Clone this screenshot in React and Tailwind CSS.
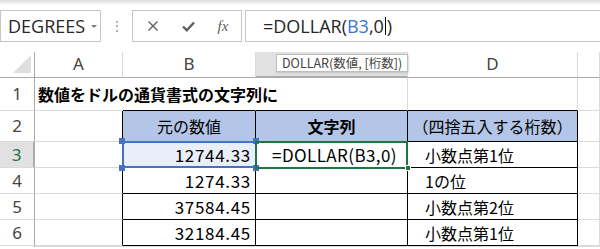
import React from "react";

// Excel-like spreadsheet view: DOLLAR function example

const GRID = "border-r border-b border-[#dadada]";
const BLACK = "border-r border-b border-black";

function XIcon() {
  return (
    <svg width="12" height="12" viewBox="0 0 12 12">
      <path d="M1.5 1.5 L10.5 10.5 M10.5 1.5 L1.5 10.5" stroke="#5f5f5f" strokeWidth="1.4" fill="none" />
    </svg>
  );
}

function CheckIcon() {
  return (
    <svg width="13" height="11" viewBox="0 0 13 11">
      <path d="M1 5.5 L4.8 9.2 L12 1.5" stroke="#5f5f5f" strokeWidth="2.4" fill="none" strokeLinejoin="miter" />
    </svg>
  );
}

function Toolbar() {
  return (
    <div className="flex h-[32px] items-stretch">
      <div className="flex w-[101px] items-center border border-[#c6c6c6] pl-[7px] font-[family-name:'Open_Sans',sans-serif] text-[18px] text-[#262626]">
        <span className="leading-none">DEGREES</span>
        <span className="ml-[6px] h-0 w-0 border-x-[3px] border-t-[3px] border-x-transparent border-t-[#7a7a7a]" />
      </div>
      <div className="flex w-[31px] flex-col items-center justify-center gap-[2.5px]">
        <span className="h-[2px] w-[2px] bg-[#b5b5b5]" />
        <span className="h-[2px] w-[2px] bg-[#b5b5b5]" />
        <span className="h-[2px] w-[2px] bg-[#b5b5b5]" />
      </div>
      <div className="flex w-[110px] items-center border border-[#c6c6c6]">
        <div className="flex w-[38px] justify-center pl-[1px]">
          <XIcon />
        </div>
        <div className="flex w-[34px] justify-center">
          <CheckIcon />
        </div>
        <div className="flex w-[36px] justify-center font-[family-name:'Liberation_Serif',serif] text-[15px] italic text-[#5f5f5f]">
          fx
        </div>
      </div>
      <div className="ml-[3px] flex flex-1 items-center border-y border-l border-[#c6c6c6] pl-[17px] font-[family-name:'Open_Sans',sans-serif] text-[18px] text-[#262626]">
        <span className="leading-none">=DOLLAR(</span>
        <span className="leading-none text-[#3b74c9]">B3</span>
        <span className="leading-none">,0</span>
        <span className="mx-[1px] h-[18px] w-[1px] bg-black" />
        <span className="leading-none">)</span>
      </div>
    </div>
  );
}

function ColHeader({ label, selected, children }) {
  return (
    <div
      className={`relative flex items-center justify-center border-r border-b border-b-[#ababab] border-r-[#dadada] pb-[2px] font-[family-name:'Noto_Sans',sans-serif] text-[17px] text-[#444] ${
        selected ? "border-b-2 border-b-[#217346] bg-[#e1e1e1]" : "bg-white"
      }`}
    >
      {label}
      {children}
    </div>
  );
}

function RowHeader({ n, selected }) {
  return (
    <div
      className={`flex items-center justify-center border-b border-r border-b-[#dadada] border-r-[#ababab] font-[family-name:'Noto_Sans',sans-serif] text-[17px] ${
        selected ? "border-r-2 border-r-[#217346] bg-[#e1e1e1] text-[#217346]" : "text-[#444]"
      }`}
    >
      {n}
    </div>
  );
}

const rows = [
  { n: 4, num: "1274.33", note: "1の位" },
  { n: 5, num: "37584.45", note: "小数点第2位" },
  { n: 6, num: "32184.45", note: "小数点第1位" },
];

export default function App() {
  return (
    <div className="h-[249px] w-[600px] overflow-hidden bg-white">
      <div className="h-[10px] bg-gradient-to-b from-[#dcdcdc] via-white to-white" />
      <Toolbar />
      <div className="mt-[10px] grid grid-cols-[35px_88px_133px_152px_170px_1fr] grid-rows-[26px_33px_31px_26px_26px_26px_26px] font-[family-name:'Noto_Sans_CJK_JP',sans-serif] text-[16px] text-black">
        {/* column headers */}
        <div className="relative border-r border-b border-r-[#ababab] border-b-[#ababab]">
          <div className="absolute bottom-[4px] right-[3px] h-0 w-0 border-b-[18px] border-l-[18px] border-b-[#dfdfdf] border-l-transparent" />
        </div>
        <ColHeader label="A" />
        <ColHeader label="B" />
        {/* the "C" letter sits under the tooltip */}
        <ColHeader label="" selected>
          <div className="absolute left-[20px] top-[2px] z-20 flex h-[18px] items-center whitespace-nowrap border border-[#bdbdbd] bg-white px-[5px] font-[family-name:'Noto_Sans_CJK_JP',sans-serif] text-[12.5px] text-[#444] shadow-[1px_1px_2px_rgba(0,0,0,0.15)]">
            DOLLAR(数値, [桁数])
          </div>
        </ColHeader>
        <ColHeader label="D" />
        <ColHeader label="" />

        {/* row 1 */}
        <RowHeader n={1} />
        <div className="flex items-center overflow-visible whitespace-nowrap border-b border-r border-b-[#dadada] border-r-transparent pl-[3px] font-bold">
          数値をドルの通貨書式の文字列に
        </div>
        <div className="border-b border-r border-b-black border-r-transparent" />
        <div className="border-b border-r border-b-black border-r-[#dadada]" />
        <div className="border-b border-r border-b-black border-r-[#dadada]" />
        <div className={GRID} />

        {/* row 2 */}
        <RowHeader n={2} />
        <div className="border-b border-r border-b-[#dadada] border-r-black" />
        <div className={`${BLACK} flex items-center justify-center bg-[#b4c6e7]`}>元の数値</div>
        <div className={`${BLACK} flex items-center justify-center bg-[#b4c6e7] font-bold`}>文字列</div>
        <div className={`${BLACK} flex items-center justify-center bg-[#b4c6e7]`}>（四捨五入する桁数）</div>
        <div className={GRID} />

        {/* row 3 */}
        <RowHeader n={3} selected />
        <div className="border-b border-r border-b-[#dadada] border-r-black" />
        <div className={`${BLACK} relative flex items-center justify-end bg-[#e9eff9] pr-[4px] text-[17px] tracking-[0.7px]`}>
          12744.33
          <div className="absolute -left-[1px] -top-[1px] bottom-[-1px] right-[-2px] z-10 border-2 border-[#4472c4]" />
          <div className="absolute -left-[4px] -top-[4px] z-10 h-[6px] w-[6px] bg-[#4472c4]" />
          <div className="absolute -right-[4px] -top-[4px] z-10 h-[6px] w-[6px] bg-[#4472c4]" />
          <div className="absolute -bottom-[4px] -left-[4px] z-10 h-[6px] w-[6px] bg-[#4472c4]" />
          <div className="absolute -bottom-[4px] -right-[4px] z-10 h-[6px] w-[6px] bg-[#4472c4]" />
        </div>
        <div className={`${BLACK} relative flex items-center justify-center pl-[6px] text-[17px] tracking-[0.4px]`}>
          =DOLLAR(B3,0)
          <div className="absolute -left-[1px] -top-[1px] bottom-[-2px] right-[-1px] z-10 border-2 border-[#217346]" />
          <div className="absolute -bottom-[4px] -right-[4px] z-10 h-[6px] w-[6px] border border-white bg-[#217346]" />
        </div>
        <div className={`${BLACK} flex items-center pl-[17px]`}>小数点第1位</div>
        <div className={GRID} />

        {rows.map((r) => (
          <React.Fragment key={r.n}>
            <RowHeader n={r.n} />
            <div className="border-b border-r border-b-[#dadada] border-r-black" />
            <div className={`${BLACK} flex items-center justify-end pr-[4px] text-[17px] tracking-[0.7px]`}>{r.num}</div>
            <div className={BLACK} />
            <div className={`${BLACK} flex items-center pl-[17px]`}>{r.note}</div>
            <div className={GRID} />
          </React.Fragment>
        ))}

        {/* row 7 (cut off by the window) */}
        <div className="border-r border-r-[#ababab]" />
        <div className={GRID} />
        <div className={GRID} />
        <div className={GRID} />
        <div className={GRID} />
        <div className={GRID} />
      </div>
    </div>
  );
}
